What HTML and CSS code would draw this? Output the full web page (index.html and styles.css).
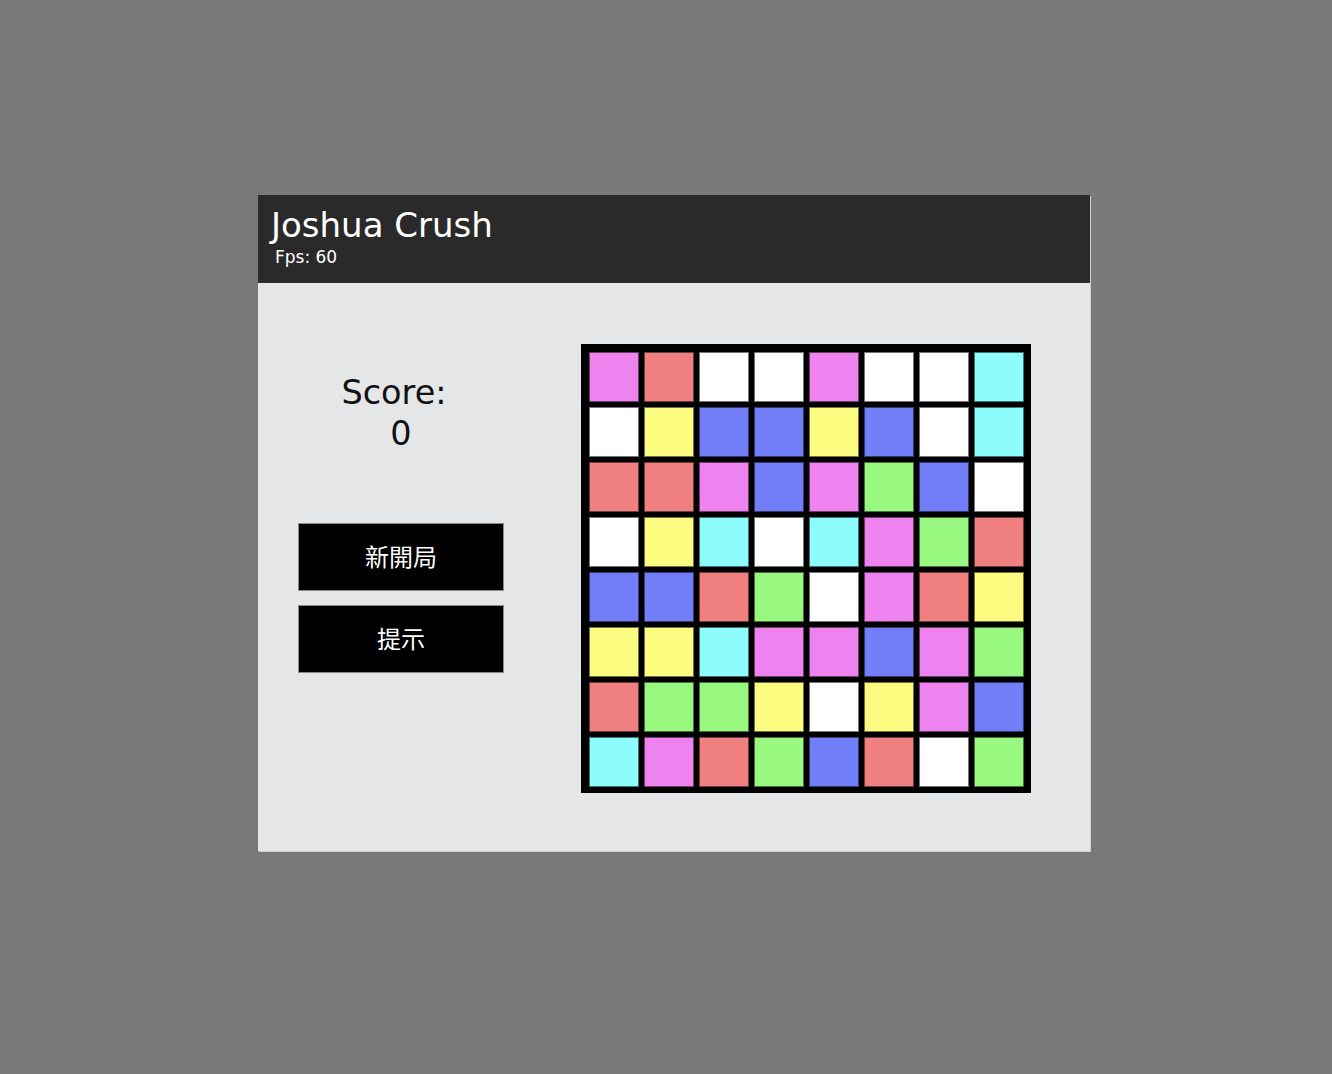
FILE: index.html
```html
<!DOCTYPE html>
<html lang="zh-Hant">
<head>
<meta charset="utf-8">
<title>Joshua Crush</title>
<link rel="stylesheet" href="styles.css">
</head>
<body>
<div class="app">
  <header class="topbar">
    <h1 class="title">Joshua Crush</h1>
    <div class="fps">Fps: 60</div>
  </header>
  <main class="content">
    <section class="side">
      <div class="score"><span class="score-label">Score:</span><br>0</div>
      <button class="btn">新開局</button>
      <button class="btn">提示</button>
    </section>
    <div class="board">
      <div class="cell v"></div><div class="cell s"></div><div class="cell w"></div><div class="cell w"></div><div class="cell v"></div><div class="cell w"></div><div class="cell w"></div><div class="cell c"></div>
      <div class="cell w"></div><div class="cell y"></div><div class="cell b"></div><div class="cell b"></div><div class="cell y"></div><div class="cell b"></div><div class="cell w"></div><div class="cell c"></div>
      <div class="cell s"></div><div class="cell s"></div><div class="cell v"></div><div class="cell b"></div><div class="cell v"></div><div class="cell g"></div><div class="cell b"></div><div class="cell w"></div>
      <div class="cell w"></div><div class="cell y"></div><div class="cell c"></div><div class="cell w"></div><div class="cell c"></div><div class="cell v"></div><div class="cell g"></div><div class="cell s"></div>
      <div class="cell b"></div><div class="cell b"></div><div class="cell s"></div><div class="cell g"></div><div class="cell w"></div><div class="cell v"></div><div class="cell s"></div><div class="cell y"></div>
      <div class="cell y"></div><div class="cell y"></div><div class="cell c"></div><div class="cell v"></div><div class="cell v"></div><div class="cell b"></div><div class="cell v"></div><div class="cell g"></div>
      <div class="cell s"></div><div class="cell g"></div><div class="cell g"></div><div class="cell y"></div><div class="cell w"></div><div class="cell y"></div><div class="cell v"></div><div class="cell b"></div>
      <div class="cell c"></div><div class="cell v"></div><div class="cell s"></div><div class="cell g"></div><div class="cell b"></div><div class="cell s"></div><div class="cell w"></div><div class="cell g"></div>
    </div>
  </main>
</div>
</body>
</html>
```
FILE: styles.css
```css
html, body {
  margin: 0;
  padding: 0;
}
body {
  background: #797979;
  font-family: "DejaVu Sans", Verdana, sans-serif;
  padding: 195px 0 0 258px;
  min-height: 1074px;
  box-sizing: border-box;
}
.app {
  width: 832px;
  background: #e5e6e8;
  box-shadow: 1px 1px 0 #cfd0d2;
}
.topbar {
  background: #2a2a2a;
  color: #fff;
  height: 88px;
  box-sizing: border-box;
  padding: 10px 0 0 13px;
}
.title {
  margin: 0;
  font-weight: normal;
  font-size: 34px;
  line-height: 40px;
}
.fps {
  font-size: 17px;
  line-height: 22px;
  padding-left: 4px;
  margin-top: 1px;
}
.content {
  display: flex;
  height: 568px;
  box-sizing: border-box;
  padding-top: 61px;
}
.side {
  width: 286px;
  display: flex;
  flex-direction: column;
  align-items: center;
  padding-top: 28px;
}
.score {
  font-size: 33.5px;
  line-height: 41px;
  text-align: center;
  color: #111;
}
.score-label {
  margin-right: 14px;
}
.btn {
  width: 206px;
  height: 68px;
  background: #000;
  color: #fff;
  border: 1px solid #8a8a8a;
  font-family: "Noto Sans CJK TC", sans-serif;
  font-size: 24px;
  line-height: 1;
  padding: 0 0 3px;
  margin-top: 14px;
  cursor: pointer;
}
.score + .btn {
  margin-top: 69px;
}
.board {
  margin-left: 37px;
  width: 450px;
  height: 449px;
  box-sizing: border-box;
  border: 5px solid #000;
  background: #000;
  padding: 2.5px;
  display: grid;
  grid-template-columns: repeat(8, 50px);
  grid-auto-rows: 50px;
  gap: 5px;
  align-content: start;
}
.cell {
  box-sizing: border-box;
  border: 1px solid rgba(0, 0, 0, 0.55);
}
.v { background: #ee82ee; }
.s { background: #f08080; }
.w { background: #ffffff; }
.c { background: #8cfcfc; }
.y { background: #fcfc80; }
.b { background: #727ef7; }
.g { background: #98f880; }
```
